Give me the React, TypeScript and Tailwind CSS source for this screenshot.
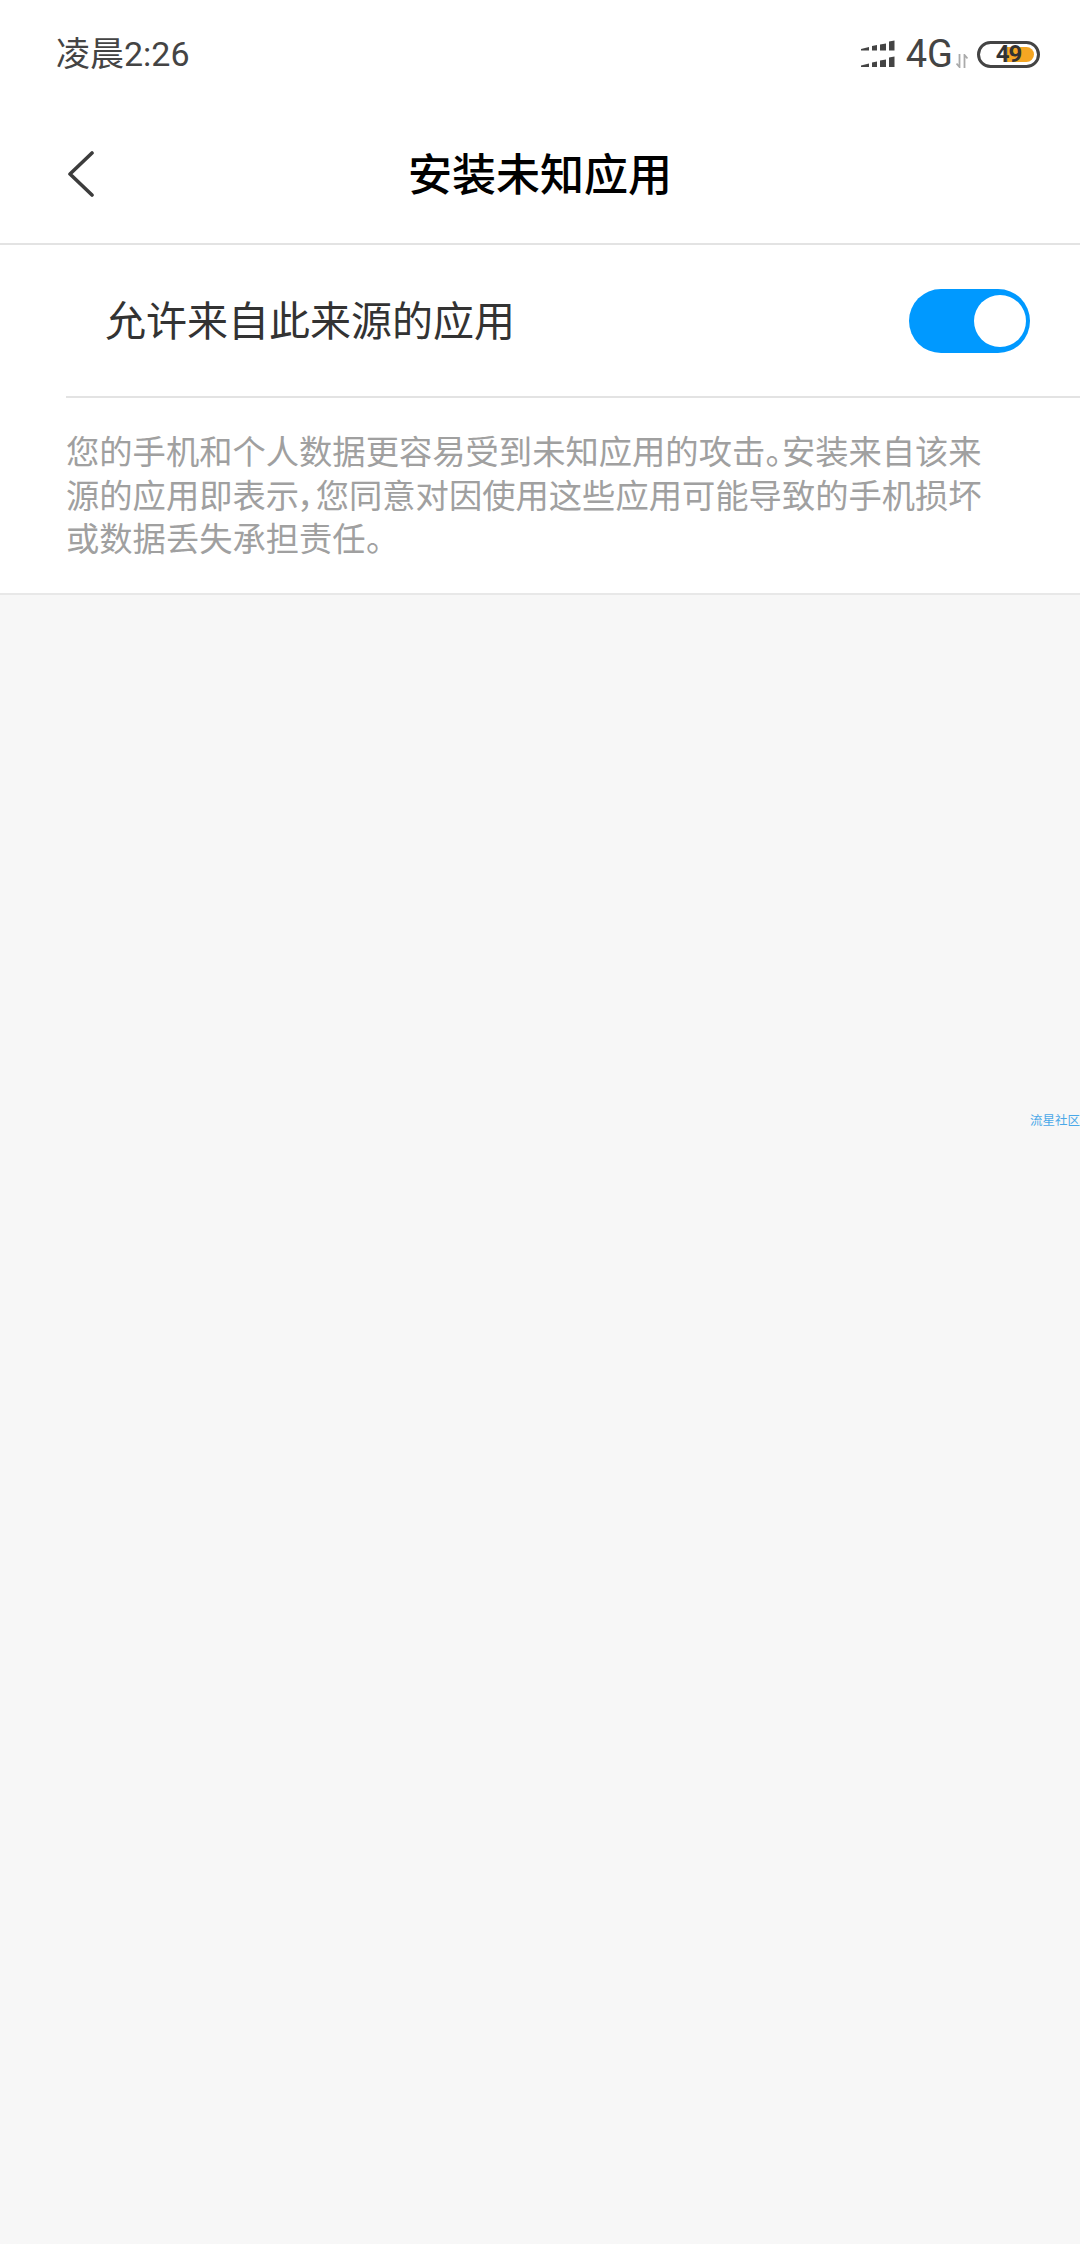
const cjk = "font-['Roboto','Noto_Sans_CJK_SC',sans-serif]";

function SignalIcon() {
  return (
    <svg width="34" height="28" viewBox="0 0 34 28" className="block">
      {/* upper row */}
      <path d="M0 9 L8 7 V10.5 H0 Z" fill="#444" />
      <path d="M11 6 L16 5 V10.5 H11 Z" fill="#444" />
      <path d="M19 4.5 L25 3.5 V10.5 H19 Z" fill="#444" />
      <path d="M28 1.5 L33.5 0.5 V10.5 H28 Z" fill="#444" />
      {/* lower row */}
      <path d="M0 25.5 L8 23.5 V27 H0 Z" fill="#444" />
      <path d="M11 22.5 L16 21.5 V27 H11 Z" fill="#444" />
      <path d="M19 20.5 L25 19.5 V27 H19 Z" fill="#444" />
      <path d="M28 17.5 L33.5 16.5 V27 H28 Z" fill="#444" />
    </svg>
  );
}

function DataArrows() {
  return (
    <svg width="12" height="14" viewBox="0 0 12 14" className="block">
      <path d="M3.5 0 V13 L0.5 9.5" fill="none" stroke="#aaa" strokeWidth="1.8" />
      <path d="M8.5 14 V1 L11.5 4.5" fill="none" stroke="#aaa" strokeWidth="1.8" />
    </svg>
  );
}

function Battery() {
  return (
    <div className="relative h-[27px] w-[63px] rounded-full border-[3px] border-[#444] bg-white">
      <div className="absolute top-[3px] right-[3px] bottom-[3px] w-[27px] rounded-r-full bg-[#f5a623]" />
      <span className="absolute inset-0 flex items-center justify-center text-[24px] leading-none font-bold tracking-[-1px] text-[#333]">
        49
      </span>
    </div>
  );
}

export default function App() {
  return (
    <div className={`flex min-h-[2244px] w-[1080px] flex-col bg-[#f7f7f7] ${cjk}`}>
      <div className="bg-white">
        {/* status bar */}
        <div className="flex h-[108px] items-center justify-between pr-[40px] pl-[56px]">
          <span className="text-[34px] leading-none text-[#444]">凌晨2:26</span>
          <div className="flex items-center">
            <SignalIcon />
            <span className="ml-[11px] text-[38px] leading-none text-[#444]">4G</span>
            <div className="mt-[14px] ml-[3px]">
              <DataArrows />
            </div>
            <div className="ml-[9px]">
              <Battery />
            </div>
          </div>
        </div>

        {/* title bar */}
        <div className="relative flex h-[137px] items-center justify-center border-b-2 border-[#e3e3e3]">
          <svg width="28" height="46" viewBox="0 0 28 46" className="absolute top-[43px] left-[67px]">
            <path d="M25 2 L3 23 L25 44" fill="none" stroke="#3c3c3c" strokeWidth="3.6" strokeLinecap="round" strokeLinejoin="round" />
          </svg>
          <h1 className="pt-[1px] text-[44px] leading-none font-medium text-black">安装未知应用</h1>
        </div>

        {/* toggle row */}
        <div className="flex h-[151px] items-center justify-between pr-[50px] pl-[105px]">
          <span className="pt-[3px] text-[41px] leading-none text-[#333]">允许来自此来源的应用</span>
          <div className="flex h-[64px] w-[121px] items-center justify-end rounded-full bg-[#0099ff] pr-[4px]">
            <div className="h-[52px] w-[52px] rounded-full bg-white" />
          </div>
        </div>

        <div className="ml-[66px] h-[2px] bg-[#e3e3e3]" />

        <p className="pt-[33px] pb-[31px] pl-[66px] text-[33.3px] leading-[43.5px] whitespace-nowrap text-[#a0a0a0] [font-feature-settings:'palt']">
          您的手机和个人数据更容易受到未知应用的攻击。安装来自该来
          <br />
          源的应用即表示，您同意对因使用这些应用可能导致的手机损坏
          <br />
          或数据丢失承担责任。
        </p>
      </div>

      <div className="relative flex-1 border-t-2 border-[#e8e8e8]">
        <span className="absolute top-[520px] right-0 text-[12.5px] leading-none whitespace-nowrap text-[#4aa8e8]">
          流星社区
        </span>
      </div>
    </div>
  );
}
